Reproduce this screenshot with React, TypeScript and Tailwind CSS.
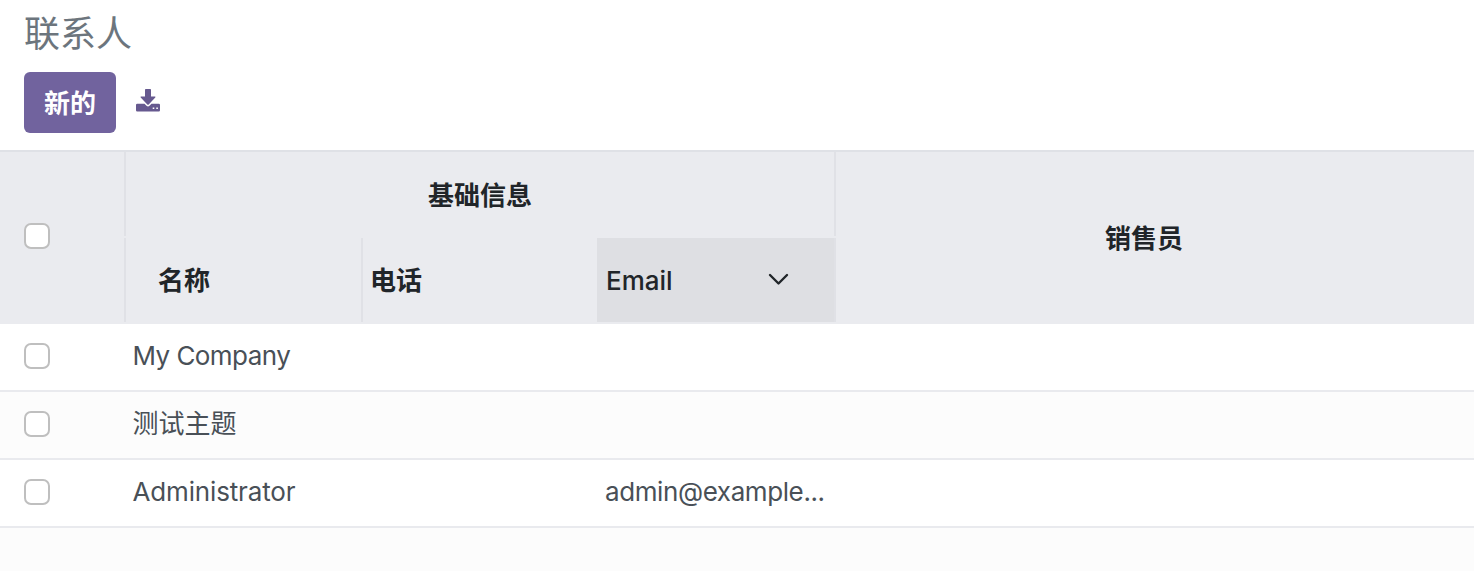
const contacts = [
  { name: 'My Company', email: '', tracking: 'tracking-[-0.55px]' },
  { name: '测试主题', email: '', tracking: 'tracking-normal' },
  { name: 'Administrator', email: 'admin@example...', tracking: 'tracking-[-0.15px]' },
];

function Checkbox() {
  return (
    <input
      type="checkbox"
      className="block size-[26px] shrink-0 appearance-none rounded-[7px] border-2 border-[#bfbfbf] bg-white"
    />
  );
}

function DownloadIcon() {
  return (
    <svg width="24" height="23" viewBox="0 0 24 23" fill="#66598f">
      <path d="M9.800 0h4.400q.8 0 .8.8V7.500h3.900q1 0 .4.9l-6.600 7q-.7.6-1.400 0L4.700 8.400Q4.100 7.500 5.100 7.500H9V.8q0-.8.8-.8Z" />
      <path
        fillRule="evenodd"
        d="M1.200 14.800h7.300l2 2q1.500 1.200 3 0l2-2h7.300q1.200 0 1.200 1.200v5.200q0 1.300-1.200 1.300H1.200Q0 22.500 0 21.200V16q0-1.200 1.200-1.200ZM16.700 18.500v1.600h1.600v-1.600ZM20.300 18.500v1.600h1.600v-1.600Z"
      />
    </svg>
  );
}

function Divider() {
  return <div className="mb-0.5 w-0.5 shrink-0 self-stretch bg-[#e0e1e6]" />;
}

export default function App() {
  return (
    <div className="flex h-[571px] w-[1474px] flex-col overflow-hidden bg-white font-['Inter','Noto_Sans_CJK_SC',sans-serif] text-[26px] leading-[39px] text-[#495057]">
      <header className="flex h-[150px] shrink-0 flex-col px-6">
        <h1 className="mt-[7px] h-[53px] text-[36px] leading-[54px] text-[#6c757d]">联系人</h1>
        <div className="mt-3 flex items-start">
          <button className="h-[61px] w-[92px] rounded-[6px] bg-[#71639e] pt-px font-semibold text-white">新的</button>
          <button className="ml-5 mt-[17px]" aria-label="Download">
            <DownloadIcon />
          </button>
        </div>
      </header>

      <div className="flex h-[174px] shrink-0 border-t-2 border-[#dfe1e6] bg-[#eaebef] font-semibold text-[#212529]">
        <div className="flex w-[124px] items-center pb-1 pl-6">
          <Checkbox />
        </div>
        <div className="w-[712px]">
          <div className="flex h-[86px]">
            <Divider />
            <div className="flex flex-1 items-center justify-center">基础信息</div>
            <Divider />
          </div>
          <div className="flex h-[86px]">
            <Divider />
            <div className="flex w-[235px] items-center pb-px pl-8">名称</div>
            <Divider />
            <div className="flex w-[234px] items-center pb-px pl-[7px]">电话</div>
            <div className="mb-0.5 flex w-[237px] items-center justify-between bg-[#dedfe3] pl-[9px] pr-[45px]">
              <span className="pt-px font-medium">Email</span>
              <svg width="22" height="14" viewBox="0 0 22 14" fill="none" stroke="#212529" strokeWidth="2.4" strokeLinecap="round" strokeLinejoin="round">
                <path d="m3 2 8.500 8.500L20 2" />
              </svg>
            </div>
            <Divider />
          </div>
        </div>
        <div className="flex flex-1 items-center justify-center pr-[22px]">销售员</div>
      </div>

      {contacts.map((contact) => (
        <div
          key={contact.name}
          className="flex h-[68px] shrink-0 items-center border-b-2 border-[#e9eaee] pb-[3px] even:bg-[#fcfcfc]"
        >
          <div className="w-[132.5px] pl-6 pt-px">
            <Checkbox />
          </div>
          <div className={`w-[472.5px] ${contact.tracking}`}>{contact.name}</div>
          <div className="tracking-[-0.4px]">{contact.email}</div>
        </div>
      ))}
      <div className="flex-1 bg-[#fcfcfc]" />
    </div>
  );
}
